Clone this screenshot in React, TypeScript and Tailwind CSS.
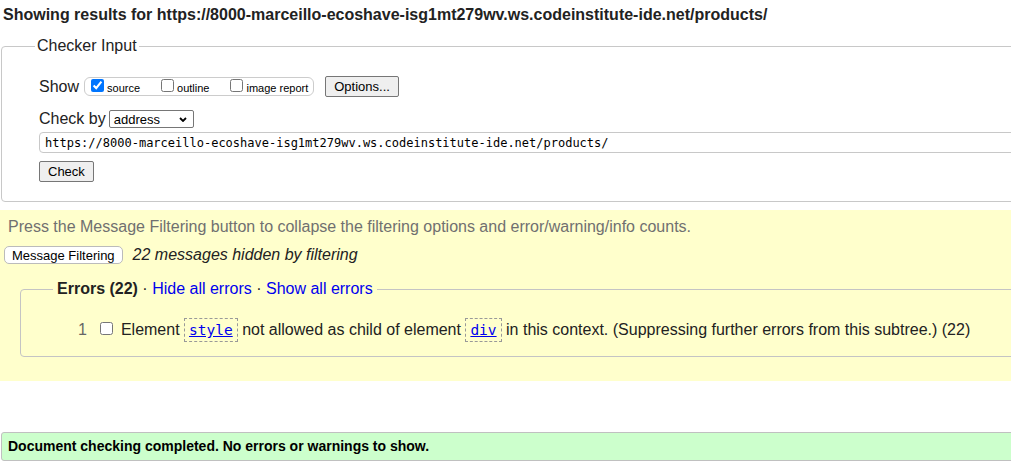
import React from "react";

const URL = "https://8000-marceillo-ecoshave-isg1mt279wv.ws.codeinstitute-ide.net/products/";

function Cb({ checked, label }: { checked?: boolean; label: string }) {
  return (
    <label className="flex items-start">
      <input
        type="checkbox"
        defaultChecked={checked}
        className="m-0 h-[13px] w-[13px] accent-[#0075ff]"
      />
      <span className="ml-[3px] mt-[3px] text-[11px] leading-[13px] text-black">{label}</span>
    </label>
  );
}

function Code({ children }: { children: React.ReactNode }) {
  return (
    <code className="inline-block border border-dashed border-[#999] px-[4px] py-[3px] font-['DejaVu_Sans_Mono',monospace] text-[14.5px] leading-[16px] text-[#0000ee] underline">
      {children}
    </code>
  );
}

export default function App() {
  return (
    <div className="h-[466px] w-[1011px] overflow-hidden bg-white font-['Liberation_Sans',Arial,sans-serif] text-[#222]">
      <div className="w-[1100px]">
        <h2 className="pl-[3px] pt-[6px] text-[16px] font-bold leading-[18px]">
          Showing results for {URL}
        </h2>

        <fieldset className="ml-[1px] mt-[13px] w-[1080px] rounded-[4px] border border-[#c8c8c8] pb-[19px] pl-[37px] pr-[10px]">
          <legend className="-ml-[4px] px-[2px] text-[16px] leading-[18px]">Checker Input</legend>

          <div className="mt-[21px] flex h-[21px] items-center">
            <span className="text-[16px] leading-[18px]">Show</span>
            <div className="ml-[5px] flex h-[19px] items-start gap-[21px] rounded-[6px] border border-[#ccc] pl-[6px] pr-[5px] pt-[1px]">
              <Cb checked label="source" />
              <Cb label="outline" />
              <Cb label="image report" />
            </div>
            <button className="ml-[11px] h-[21px] rounded-[2px] border border-[#767676] bg-[#efefef] px-[8px] text-[13px] leading-[15px] text-black">
              Options...
            </button>
          </div>

          <div className="mt-[13px] flex h-[18px] items-center">
            <span className="text-[16px] leading-[18px]">Check by</span>
            <div className="ml-[3px] flex h-[18px] w-[85px] items-center justify-between rounded-[2px] border border-[#767676] bg-white pl-[4px] pr-[6px] text-[13px] leading-[15px] text-black">
              <span>address</span>
              <svg width="8" height="5" viewBox="0 0 8 5">
                <path d="M1 1l3 3 3-3" fill="none" stroke="#000" strokeWidth="1.8" />
              </svg>
            </div>
          </div>

          <input
            readOnly
            defaultValue={URL}
            className="mt-[4px] block h-[21px] w-full rounded-[4px] border border-[#c8c8c8] bg-white px-[5px] font-['DejaVu_Sans_Mono',monospace] text-[12px] text-black"
          />

          <button className="mt-[8px] block h-[21px] rounded-[2px] border border-[#767676] bg-[#efefef] px-[8px] text-[13px] leading-[15px] text-black">
            Check
          </button>
        </fieldset>

        <div className="mt-[8px] bg-[#ffffcc] pb-[24px] pt-[8px]">
          <p className="pl-[8px] text-[16px] leading-[18px] text-[#707070]">
            Press the Message Filtering button to collapse the filtering options and error/warning/info counts.
          </p>
          <div className="mt-[10px] flex h-[18px] items-center">
            <button className="ml-[4px] h-[18px] rounded-[5px] border border-[#bbb] bg-white px-[7px] text-[13px] leading-[15px] text-black">
              Message Filtering
            </button>
            <span className="ml-[10px] text-[16px] italic leading-[18px]">22 messages hidden by filtering</span>
          </div>

          <fieldset className="ml-[20px] mt-[16px] rounded-[4px] border border-[#c4c4c4] pb-[14px] pl-[32px]">
            <legend className="px-[4px] text-[16px] leading-[18px]">
              <b>Errors (22)</b> · <a className="cursor-pointer text-[#0000ee]">Hide all errors</a> ·{" "}
              <a className="cursor-pointer text-[#0000ee]">Show all errors</a>
            </legend>
            <div className="ml-[25px] mt-[20px] flex items-center text-[16px] leading-[18px]">
              <span className="text-[#666]">1</span>
              <input type="checkbox" className="m-0 ml-[13px] h-[13px] w-[13px] -translate-y-[2px]" />
              <span className="ml-[8px]">
                Element <Code>style</Code> not allowed as child of element <Code>div</Code> in this context.
                (Suppressing further errors from this subtree.) (22)
              </span>
            </div>
          </fieldset>
        </div>

        <div className="ml-[1px] mt-[51px] rounded-[3px] border border-[#c0c0c0] bg-[#ccffcc] py-[5px] pl-[6px] text-[14px] font-bold leading-[17px] text-black">
          Document checking completed. No errors or warnings to show.
        </div>
      </div>
    </div>
  );
}
